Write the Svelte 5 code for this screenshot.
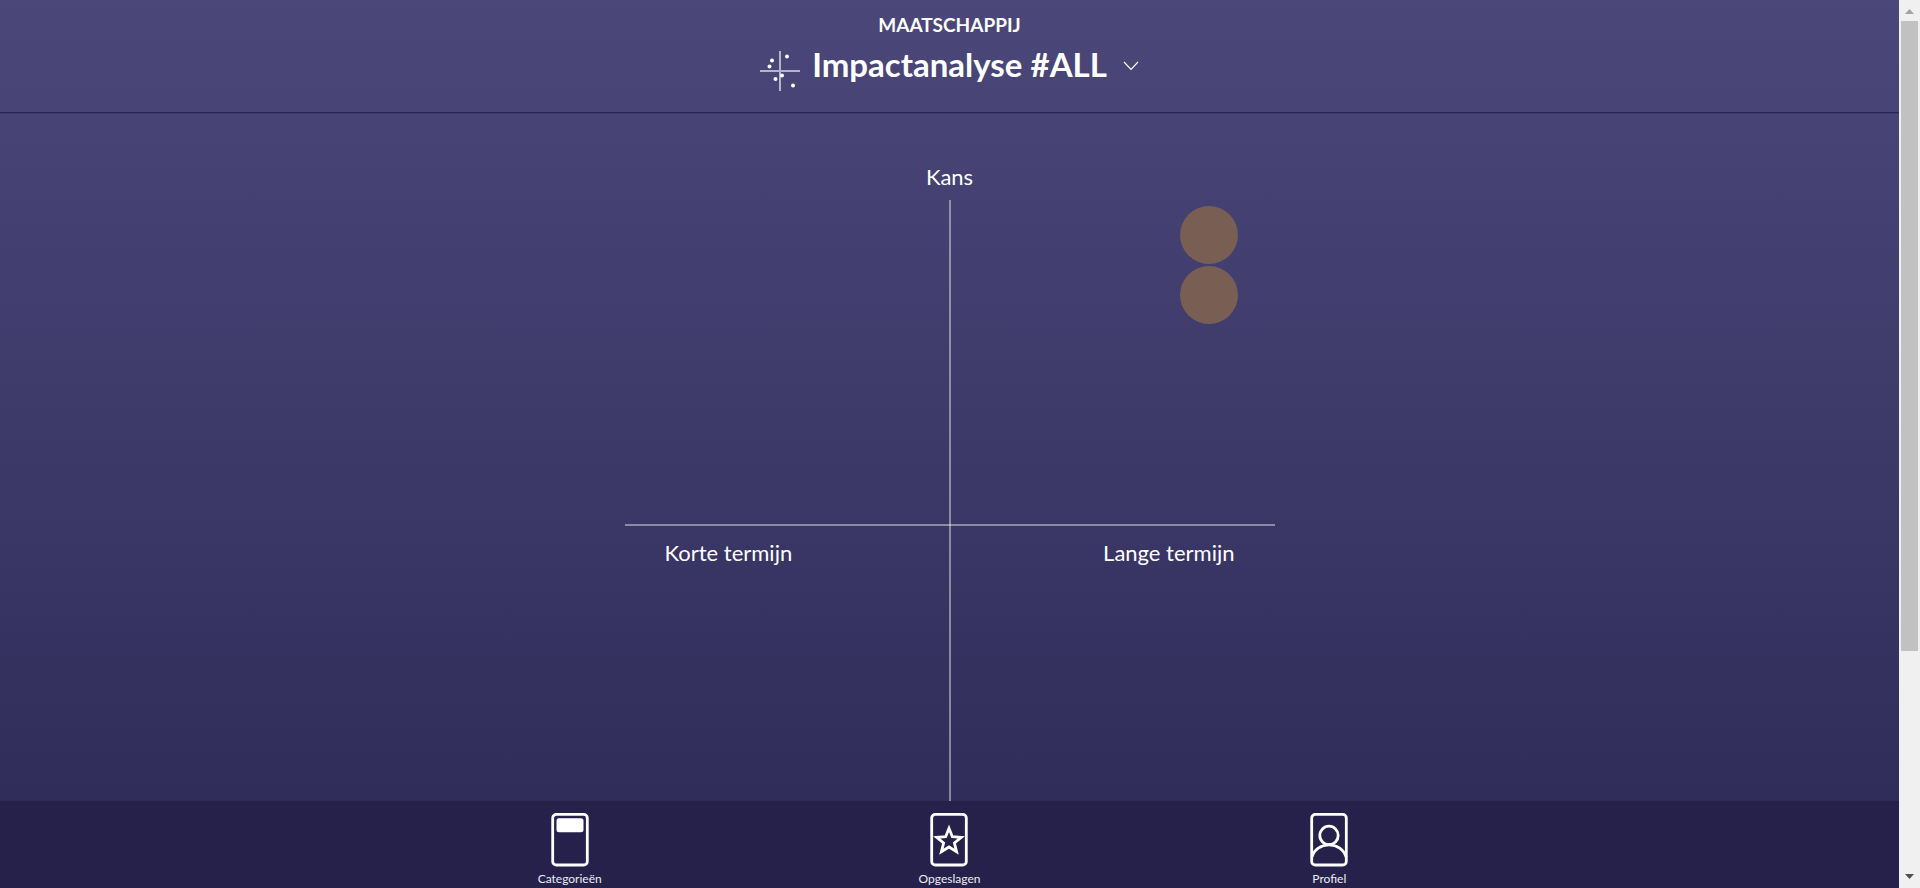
<script>
  const bubbles = [
    { id: 1, x: 89.9, y: 5.4 },
    { id: 2, x: 89.9, y: 14.6 }
  ];
  const tabs = ['Categorieën', 'Opgeslagen', 'Profiel'];
</script>

<div class="shell">
  <div class="page">
    <header>
      <p class="category">MAATSCHAPPIJ</p>
      <button class="title" type="button">
        <svg class="logo" viewBox="0 0 40 40" aria-hidden="true">
          <path d="M20 0V40M0 20H40" stroke="#fff" stroke-opacity=".6" stroke-width="2" />
          <g fill="#fff">
            <circle cx="27" cy="5.5" r="2" />
            <circle cx="12" cy="9.5" r="2" />
            <circle cx="9.5" cy="15.5" r="2" />
            <circle cx="22" cy="24.5" r="2" />
            <circle cx="15.5" cy="28" r="2" />
            <circle cx="33" cy="34.5" r="2" />
          </g>
        </svg>
        <span>Impactanalyse #ALL</span>
        <svg class="chevron" viewBox="0 0 16 10" aria-hidden="true">
          <path d="M1 1L8 8.5L15 1" fill="none" stroke="#fff" stroke-width="1.1" />
        </svg>
      </button>
    </header>

    <main>
      <p class="axis">Kans</p>
      <div class="chart">
        <p class="axis">Korte termijn</p>
        <p class="axis">Lange termijn</p>
        {#each bubbles as b (b.id)}
          <span class="bubble" style="left: {b.x}%; top: {b.y}%"></span>
        {/each}
      </div>
    </main>

    <nav>
      {#each tabs as tab, i}
        <a href="#{tab}">
          <svg viewBox="0 0 38 54" fill="none" stroke="#fff" stroke-width="2.8" aria-hidden="true">
            <rect x="1.7" y="1.4" width="34.6" height="50.6" rx="3.6" />
            {#if i === 0}
              <rect x="5.5" y="5.2" width="27" height="14" rx="2.5" fill="#fff" stroke="none" />
            {:else if i === 1}
              <path d="M19 15.3L22.3 23.7L31.3 24.3L24.4 30L26.6 38.8L19 34L11.4 38.8L13.6 30L6.7 24.3L15.7 23.7Z" />
            {:else}
              <circle cx="19" cy="22.4" r="9.2" />
              <path d="M2 44C4 36.5 11 31.8 19 31.8S34 36.5 36 44" />
            {/if}
          </svg>
          <span>{tab}</span>
        </a>
      {/each}
    </nav>
  </div>

  <div class="scrollbar" aria-hidden="true">
    <svg viewBox="0 0 9 5"><path d="M0 5L4.5 0L9 5Z" fill="#a3a3a3" /></svg>
    <div class="track"><div class="thumb"></div></div>
    <svg viewBox="0 0 9 5"><path d="M0 0L4.5 5L9 0Z" fill="#505050" /></svg>
  </div>
</div>

<style>
  :global(body) {
    margin: 0;
  }
  .shell {
    display: flex;
    height: 100vh;
    overflow: hidden;
    font-family: Lato, sans-serif;
    color: #fff;
  }
  .page {
    flex: 1;
    min-width: 0;
    display: flex;
    flex-direction: column;
    background: linear-gradient(#4b4779, #2e2a57);
  }
  p {
    margin: 0;
  }
  header {
    display: flex;
    flex-direction: column;
    align-items: center;
    height: 112px;
    border-bottom: 1px solid #282350;
    box-shadow: 0 1px #3f3a6c;
  }
  .category {
    margin-top: 13px;
    font-size: 19px;
    line-height: 24px;
    font-weight: 700;
  }
  .title {
    display: flex;
    align-items: flex-start;
    margin-top: 7px;
    padding: 0;
    border: 0;
    background: none;
    color: inherit;
    font: 700 33px/40px Lato, sans-serif;
    cursor: pointer;
  }
  .logo {
    width: 40px;
    height: 40px;
    margin: 7px 12px 0 0;
  }
  .chevron {
    width: 16px;
    height: 10px;
    margin: 17px 0 0 16px;
  }
  main {
    flex: 1;
    min-height: 0;
    overflow: hidden;
    display: flex;
    flex-direction: column;
    align-items: center;
    padding-top: 48px;
  }
  .axis {
    font-size: 22px;
    line-height: 32px;
    font-weight: 400;
    text-align: center;
  }
  .chart {
    position: relative;
    flex: none;
    display: grid;
    grid-template-columns: 1fr 1fr;
    align-items: center;
    box-sizing: border-box;
    width: min(100%, 650px);
    aspect-ratio: 1;
    margin-top: 7px;
    padding: 55px 40px 0;
    background:
      linear-gradient(#ffffff6b, #ffffff6b) center / 2px 100% no-repeat,
      linear-gradient(#ffffff6b, #ffffff6b) center / 100% 2px no-repeat;
  }
  .chart .axis {
    text-align: left;
  }
  .chart .axis + .axis {
    text-align: right;
  }
  .bubble {
    position: absolute;
    width: 58px;
    height: 58px;
    border-radius: 50%;
    background: #795e54;
    transform: translate(-50%, -50%);
  }
  nav {
    display: grid;
    grid-template-columns: repeat(3, 20%);
    justify-content: center;
    height: 87px;
    background: #25214b;
  }
  nav a {
    display: flex;
    flex-direction: column;
    align-items: center;
    padding-top: 12px;
    color: #eeedf3;
    font-size: 12px;
    line-height: 16px;
    text-decoration: none;
  }
  nav svg {
    width: 38px;
    height: 54px;
    margin-bottom: 4px;
  }
  .scrollbar {
    display: flex;
    flex-direction: column;
    align-items: center;
    gap: 7px;
    box-sizing: border-box;
    width: 21px;
    padding: 9px 2px;
    background: #f0f0f0;
  }
  .scrollbar svg {
    width: 9px;
    height: 5px;
  }
  .track {
    flex: 1;
    width: 100%;
  }
  .thumb {
    height: 74.5%;
    background: #c1c1c1;
  }
</style>
